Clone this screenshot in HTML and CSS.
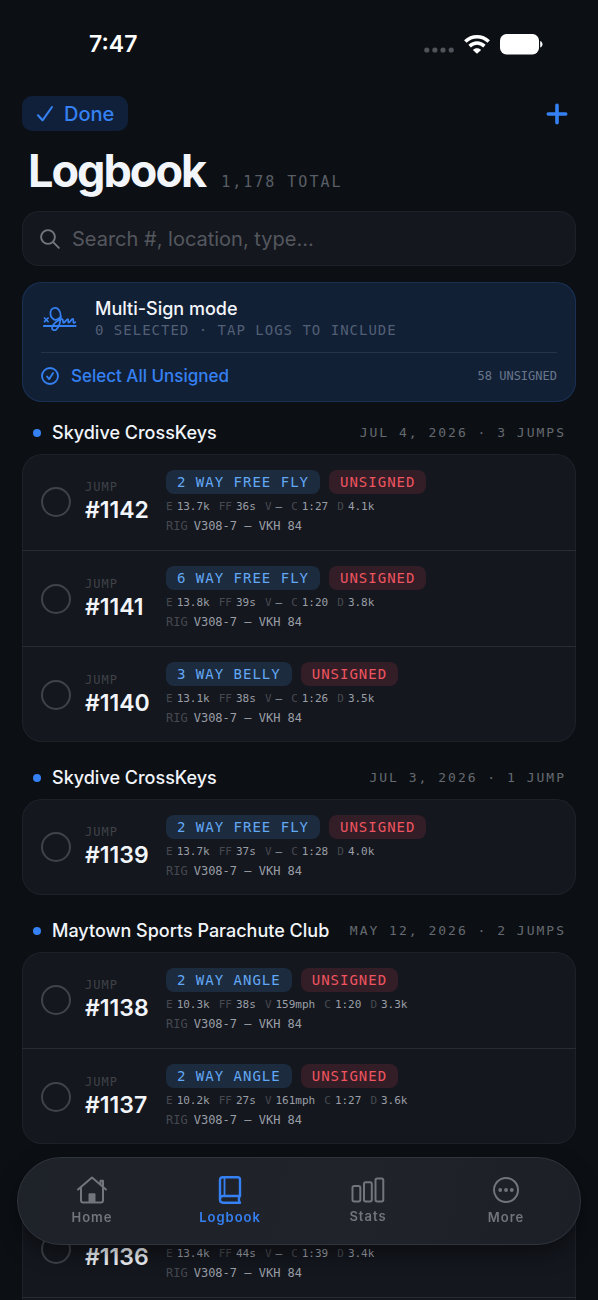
FILE: index.html
```html
<!DOCTYPE html>
<html lang="en">
<head>
<meta charset="utf-8">
<meta name="viewport" content="width=device-width, initial-scale=1">
<title>Logbook</title>
<link rel="stylesheet" href="styles.css">
</head>
<body>
<div class="status">
  <span class="clock">7:47</span>
  <div class="status-icons">
    <svg width="30" height="8" viewBox="0 0 30 8" fill="#505359"><circle cx="2.8" cy="3" r="2.6"/><circle cx="10.9" cy="3" r="2.6"/><circle cx="19" cy="3" r="2.6"/><circle cx="27.2" cy="3" r="2.6"/></svg>
    <svg width="26" height="20" viewBox="0 0 26 20" fill="none" stroke="#fff" stroke-width="3.5"><path d="M1.3 7.5C8 1 18 1 24.7 7.5"/><path d="M5.6 12.1C10 8 16 8 20.4 12.1"/><path d="M13 19.8l-4.1-3.9c2-2.2 6.200-2.200 8.200 0z" fill="#fff" stroke="none"/></svg>
    <svg width="43" height="21" viewBox="0 0 43 21" fill="#fff"><rect width="39" height="20.5" rx="6.5"/><path d="M40.2 7c3 1 3 5.500 0 6.500z"/></svg>
  </div>
</div>
<main class="page">
  <div class="toolbar">
    <button class="done"><svg width="18" height="18" viewBox="0 0 18 18" fill="none" stroke="currentColor" stroke-width="2.1" stroke-linecap="round" stroke-linejoin="round"><path d="M2 10.300l4.500 5L16 2"/></svg>Done</button>
    <button class="add" aria-label="Add jump"><svg width="22" height="22" viewBox="0 0 22 22" fill="none" stroke="currentColor" stroke-width="3.6" stroke-linecap="round"><path d="M11 2.300v17.400M2.300 11h17.400"/></svg></button>
  </div>
  <header class="heading"><h1>Logbook</h1><span class="total">1,178 TOTAL</span></header>
  <label class="search">
    <svg width="20" height="20" viewBox="0 0 20 20" fill="none" stroke="currentColor" stroke-width="1.9" stroke-linecap="round"><circle cx="8" cy="8" r="6.900"/><path d="M13.200 13.200l5.600 5.600"/></svg>
    <input type="search" placeholder="Search #, location, type..." aria-label="Search jumps">
  </label>
  <section class="banner">
    <div class="banner-top">
      <svg width="34" height="26" viewBox="0 0 34 26" fill="none" stroke="currentColor" stroke-width="1.7" stroke-linecap="round" stroke-linejoin="round"><path d="M1.500 12l3.600 3.600M5.100 12l-3.600 3.600"/><path d="M1 20h31.500" stroke-width="2.2"/><path d="M11 13.500C6.500 11 6 3.500 11 2c4-1 6.500 3 6.600 7.500.2 6-1.600 11.300-4.100 13.800-1.800 1.700-4.500 1-4.500-1.300.2-3.500 6-8.300 9.600-8.800 1.900-.2 1.100 2.500 1.600 3.400.8 1.200 2.800-2.600 4.300-3.300 1.400-.5.300 2.800 1 3.300 1.200.7 2.700-3.700 4.300-3.700 1.300.2-.1 3.300.8 3.900.6.300 1.200-.2 1.700-.7"/><path d="M11 13.500c2.300 1 5.500-1 7-3"/></svg>
      <div class="banner-text">
        <h2>Multi-Sign mode</h2>
        <p>0 SELECTED · TAP LOGS TO INCLUDE</p>
      </div>
    </div>
    <div class="banner-bottom">
      <button class="select-all"><svg width="18" height="18" viewBox="0 0 18 18" fill="none" stroke="currentColor" stroke-width="1.8" stroke-linecap="round" stroke-linejoin="round"><circle cx="9" cy="9" r="8"/><path d="M6 9.500l2.200 2.600 3.900-6.100"/></svg>Select All Unsigned</button>
      <span class="unsigned-count">58 UNSIGNED</span>
    </div>
  </section>
  <div class="groups" id="groups"></div>
</main>
<nav class="tabs">
  <a href="#home"><svg width="32" height="28" viewBox="0 0 32 28" fill="none" stroke="currentColor" stroke-width="2" stroke-linecap="round" stroke-linejoin="round"><path d="M2 13.500L16 1.600l14 11.900M5 11.500v12.800c0 1.500.8 2.200 2.200 2.200h17.600c1.400 0 2.200-.7 2.200-2.200V11.500M24.500 8.500V4.700h2.500v6"/><path d="M12.500 26v-7.500c0-.8.400-1.200 1.200-1.200h4.600c.8 0 1.200.4 1.200 1.200V26z" fill="currentColor" stroke="none"/></svg>Home</a>
  <a href="#logbook" class="active" aria-current="page"><svg width="24" height="28" viewBox="0 0 24 28" fill="none" stroke="currentColor" stroke-width="2.4" stroke-linecap="round" stroke-linejoin="round"><path d="M22 20V3.500c0-1.500-.8-2.300-2.300-2.300H5C3 1.200 2 2.300 2 4.200v19.300C2 25.500 3.200 26.700 5 26.700h17c-1.500-1.500-1.500-5 0-6.700H5c-1.900 0-3 1.300-3 3.300"/><path d="M6.500 1.500V20" stroke-width="1.8"/></svg>Logbook</a>
  <a href="#stats"><svg width="34" height="26" viewBox="0 0 34 26" fill="none" stroke="currentColor" stroke-width="2"><rect x="1.500" y="9" width="7.800" height="15.500" rx="1.700"/><rect x="13" y="5.200" width="7.800" height="19.300" rx="1.700"/><rect x="24.500" y="1.500" width="7.800" height="23" rx="1.700"/></svg>Stats</a>
  <a href="#more"><svg width="28" height="28" viewBox="0 0 28 28" fill="none" stroke="currentColor" stroke-width="2"><circle cx="14" cy="14" r="12"/><g fill="currentColor" stroke="none"><circle cx="8.200" cy="14" r="1.900"/><circle cx="14" cy="14" r="1.900"/><circle cx="19.800" cy="14" r="1.900"/></g></svg>More</a>
</nav>
<script src="app.js"></script>
</body>
</html>
```
FILE: styles.css
```css
* { box-sizing: border-box; margin: 0; }
:root {
  --blue: #3580f3;
  --mono: "DejaVu Sans Mono", "Liberation Mono", monospace;
}
body {
  height: 100vh;
  overflow: hidden;
  background: #0c1015;
  color: #f2f5fa;
  font-family: Inter, "Liberation Sans", sans-serif;
}
button { border: 0; padding: 0; background: none; color: var(--blue); font: inherit; cursor: pointer; }
svg { flex: none; display: block; }

.status { display: flex; justify-content: space-between; align-items: center; height: 88px; padding: 0 55px 0 89px; }
.clock { font-size: 23px; font-weight: 600; color: #fff; }
.status-icons { display: flex; align-items: center; gap: 10px; }
.status-icons svg:first-child { align-self: flex-end; }

.page { padding: 8px 22px 0; }
.toolbar { display: flex; justify-content: space-between; align-items: center; }
.done { display: flex; align-items: center; gap: 10px; height: 35px; padding: 0 14px; border-radius: 10px; background: #10203a; font-size: 20px; font-weight: 500; }
.add { padding: 0 8px; }

.heading { display: flex; align-items: baseline; gap: 16px; height: 80px; padding: 12px 6px 0; }
h1 { font-size: 45px; line-height: 56px; font-weight: 700; letter-spacing: -2px; }
.total { font: 15px/20px var(--mono); letter-spacing: 2px; color: #5a5e65; }

.search { display: flex; align-items: center; gap: 12px; height: 55px; padding: 0 18px; border-radius: 17px; background: #14171e; box-shadow: inset 0 0 0 1px #1d2128; color: #74777d; }
.search input { flex: 1; min-width: 0; padding: 0; border: 0; outline: 0; background: none; color: #f2f5fa; font: 20px/26px Inter, sans-serif; }
.search input::placeholder { color: #54575e; opacity: 1; }

.banner { margin-top: 16px; padding: 16px 19px 3px; border-radius: 20px; background: #122036; box-shadow: inset 0 0 0 1px #193052; }
.banner-top { display: flex; align-items: center; gap: 18px; padding: 0 0 12px 2px; color: var(--blue); }
h2 { font-size: 18px; line-height: 22px; font-weight: 500; color: #f2f5fa; }
.banner-text p { font: 14px/20px var(--mono); letter-spacing: 1px; color: #515f74; }
.banner-bottom { display: flex; justify-content: space-between; align-items: center; height: 47px; border-top: 1px solid #243348; }
.select-all { display: flex; align-items: center; gap: 12px; font-size: 17px; font-weight: 500; }
.unsigned-count { font: 12px/16px var(--mono); color: #69778c; }

.groups { display: grid; gap: 5px; }
.group-head { display: flex; justify-content: space-between; align-items: center; padding: 20px 10px 10px 11px; white-space: nowrap; }
.group-head h3 { display: flex; align-items: center; gap: 11px; font-size: 18px; line-height: 22px; font-weight: 500; }
.group-head h3::before { content: ""; width: 8px; height: 8px; border-radius: 50%; background: var(--blue); }
.group-head span { font: 13px/22px var(--mono); letter-spacing: 2px; color: #666a70; }

.card { padding: 0; list-style: none; border-radius: 20px; background: #14171e; box-shadow: inset 0 0 0 1px #1d2128; }
.jump { display: grid; grid-template-columns: 30px 67px 1fr; column-gap: 14px; align-items: center; height: 96px; padding: 0 19px; }
.card li + li .jump { border-top: 1px solid #272b32; }
.jump input { appearance: none; width: 30px; height: 30px; margin: 0; border: 2px solid #3f434a; border-radius: 50%; }
.jump input:checked { border-color: var(--blue); background: var(--blue); }
.number small { display: block; font: 12px/16px var(--mono); letter-spacing: 1px; color: #3f4249; }
.number b { display: block; font-size: 23px; line-height: 30px; font-weight: 600; }
.chips { display: flex; gap: 9px; }
.chip { height: 24px; padding: 0 11px; border-radius: 8px; font: 14px/24px var(--mono); letter-spacing: 1px; white-space: nowrap; }
.type { background: #1d2b3f; color: #62a8f5; }
.unsigned { background: #331d26; color: #ee5560; }
.metrics { display: flex; gap: 9px; margin-top: 3px; font: 11px/20px var(--mono); color: #9a9ea6; white-space: nowrap; }
.metrics span { display: flex; gap: 4px; }
.rig { display: flex; gap: 6px; font: 12px/18px var(--mono); color: #9a9ea6; }
.metrics i, .rig i { font-style: normal; color: #464950; }

.tabs { position: fixed; left: 17px; right: 17px; bottom: 55px; display: grid; grid-template-columns: repeat(4, 1fr); height: 88px; padding: 0 5px; border-radius: 44px; background: linear-gradient(100deg, #1e2229, #202329 60%, #1c2026); border: 1px solid #30343b; box-shadow: 0 8px 22px rgba(0, 0, 0, .45); }
.tabs a { display: flex; flex-direction: column; align-items: center; justify-content: center; gap: 4px; color: #72757b; font-size: 13px; line-height: 18px; font-weight: 600; letter-spacing: 1px; text-decoration: none; }
.tabs .active { color: var(--blue); }
```
FILE: app.js
```js
const groups = [
  ["Skydive CrossKeys", "JUL 4, 2026 · 3 JUMPS", [
    [1142, "2 WAY FREE FLY", "13.7k", "36s", "—", "1:27", "4.1k"],
    [1141, "6 WAY FREE FLY", "13.8k", "39s", "—", "1:20", "3.8k"],
    [1140, "3 WAY BELLY", "13.1k", "38s", "—", "1:26", "3.5k"]]],
  ["Skydive CrossKeys", "JUL 3, 2026 · 1 JUMP", [
    [1139, "2 WAY FREE FLY", "13.7k", "37s", "—", "1:28", "4.0k"]]],
  ["Maytown Sports Parachute Club", "MAY 12, 2026 · 2 JUMPS", [
    [1138, "2 WAY ANGLE", "10.3k", "38s", "159mph", "1:20", "3.3k"],
    [1137, "2 WAY ANGLE", "10.2k", "27s", "161mph", "1:27", "3.6k"]]],
  ["Skydive CrossKeys", "MAY 10, 2026 · 2 JUMPS", [
    [1136, "2 WAY FREE FLY", "13.4k", "44s", "—", "1:39", "3.4k"],
    [1135, "2 WAY FREE FLY", "13.5k", "40s", "—", "1:30", "3.5k"]]]
];
const keys = ["E", "FF", "V", "C", "D"];

const row = ([id, type, ...values]) => `<li><label class="jump">
  <input type="checkbox" aria-label="Select jump ${id}">
  <span class="number"><small>JUMP</small><b>#${id}</b></span>
  <div>
    <div class="chips"><span class="chip type">${type}</span><span class="chip unsigned">UNSIGNED</span></div>
    <div class="metrics">${values.map((v, i) => `<span><i>${keys[i]}</i>${v}</span>`).join("")}</div>
    <div class="rig"><i>RIG</i>V308-7 – VKH 84</div>
  </div></label></li>`;

document.getElementById("groups").innerHTML = groups.map(([place, date, jumps]) =>
  `<section><div class="group-head"><h3>${place}</h3><span>${date}</span></div>
  <ul class="card">${jumps.map(row).join("")}</ul></section>`).join("");
```
